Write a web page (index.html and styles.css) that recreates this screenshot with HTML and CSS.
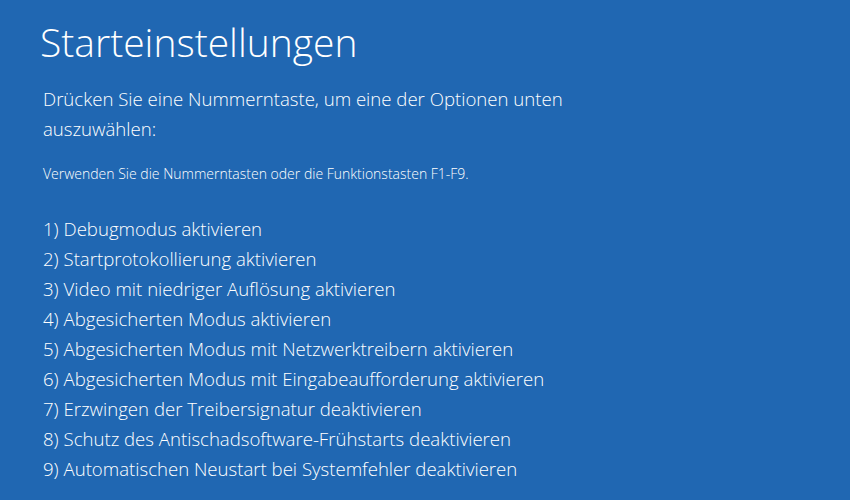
FILE: index.html
```html
<!DOCTYPE html>
<html lang="de">
<head>
<meta charset="utf-8">
<title>Starteinstellungen</title>
<link rel="stylesheet" href="styles.css">
</head>
<body>
<main class="screen">
  <h1 class="title">Starteinstellungen</h1>
  <p class="lead">Drücken Sie eine Nummerntaste, um eine der Optionen unten auszuwählen:</p>
  <p class="hint">Verwenden Sie die Nummerntasten oder die Funktionstasten F1-F9.</p>
  <ol class="options">
    <li>1) Debugmodus aktivieren</li>
    <li>2) Startprotokollierung aktivieren</li>
    <li>3) Video mit niedriger Auflösung aktivieren</li>
    <li>4) Abgesicherten Modus aktivieren</li>
    <li>5) Abgesicherten Modus mit Netzwerktreibern aktivieren</li>
    <li>6) Abgesicherten Modus mit Eingabeaufforderung aktivieren</li>
    <li>7) Erzwingen der Treibersignatur deaktivieren</li>
    <li>8) Schutz des Antischadsoftware-Frühstarts deaktivieren</li>
    <li>9) Automatischen Neustart bei Systemfehler deaktivieren</li>
  </ol>
</main>
</body>
</html>
```
FILE: styles.css
```css
html, body {
  margin: 0;
  padding: 0;
  height: 100%;
}
body {
  background: #2067b2;
  color: #ffffff;
  font-family: "Open Sans", "Noto Sans", "Liberation Sans", sans-serif;
}
.screen {
  padding: 14px 0 0 40px;
}
.title {
  margin: 0;
  font-size: 39px;
  font-weight: 300;
  line-height: 56px;
}
.lead {
  margin: 14px 0 0 3px;
  width: 560px;
  font-size: 18.6px;
  font-weight: 300;
  line-height: 30px;
}
.hint {
  margin: 21px 0 0 3px;
  font-size: 14px;
  font-weight: 300;
  line-height: 18px;
}
.options {
  list-style: none;
  margin: 31px 0 0 3px;
  padding: 0;
  font-size: 18.6px;
  font-weight: 300;
  line-height: 30px;
}
```
